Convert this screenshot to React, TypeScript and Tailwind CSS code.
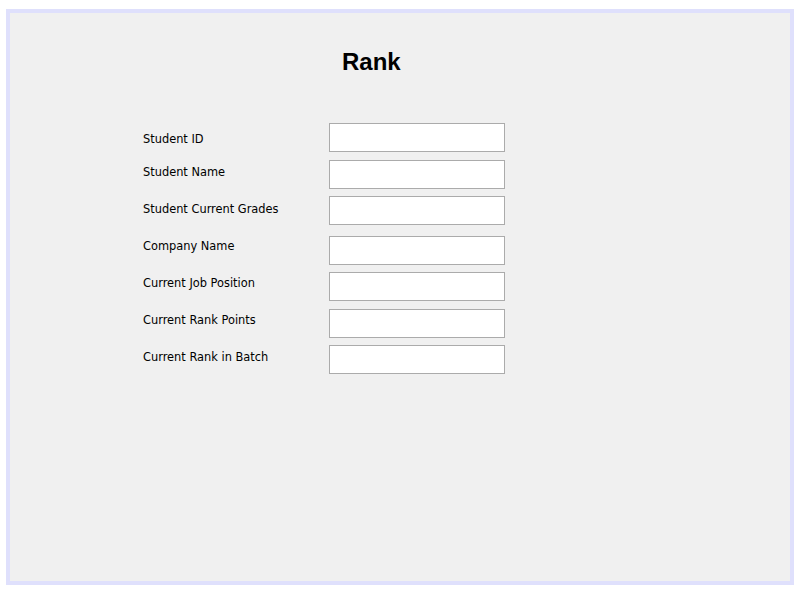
const rows = [
  { label: "Student ID", row: "mt-[47px]", lbl: "mt-[10px]" },
  { label: "Student Name", row: "mt-[8px]", lbl: "mt-[6px]" },
  { label: "Student Current Grades", row: "mt-[7px]", lbl: "mt-[7px]" },
  { label: "Company Name", row: "mt-[11px]", lbl: "mt-[4px]" },
  { label: "Current Job Position", row: "mt-[7px]", lbl: "mt-[5px]" },
  { label: "Current Rank Points", row: "mt-[8px]", lbl: "mt-[5px]" },
  { label: "Current Rank in Batch", row: "mt-[7px]", lbl: "mt-[6px]" },
];

export default function App() {
  return (
    <div className="w-[802px] h-[593px] bg-white pt-[9px] pl-[6px]">
      <div className="w-[788px] h-[576px] border-4 border-[#dfe0fc] bg-[#f0f0f0]">
        {/* Title */}
        <div className="pt-[35px] pl-[332px]">
          <h1 className="h-[28px] leading-[28px] text-[24px] font-bold text-black font-['Liberation_Sans',sans-serif]">
            Rank
          </h1>
        </div>

        {/* Form */}
        <div className="pl-[133px] flex flex-col">
          {rows.map((r) => (
            <div key={r.label} className={`flex items-start ${r.row}`}>
              <label
                className={`w-[186px] text-[11.4px] leading-[13px] text-black font-['DejaVu_Sans',sans-serif] ${r.lbl}`}
              >
                {r.label}
              </label>
              <input
                type="text"
                className="w-[176px] h-[29px] bg-white border border-[#ababab] outline-none"
              />
            </div>
          ))}
        </div>
      </div>
    </div>
  );
}
